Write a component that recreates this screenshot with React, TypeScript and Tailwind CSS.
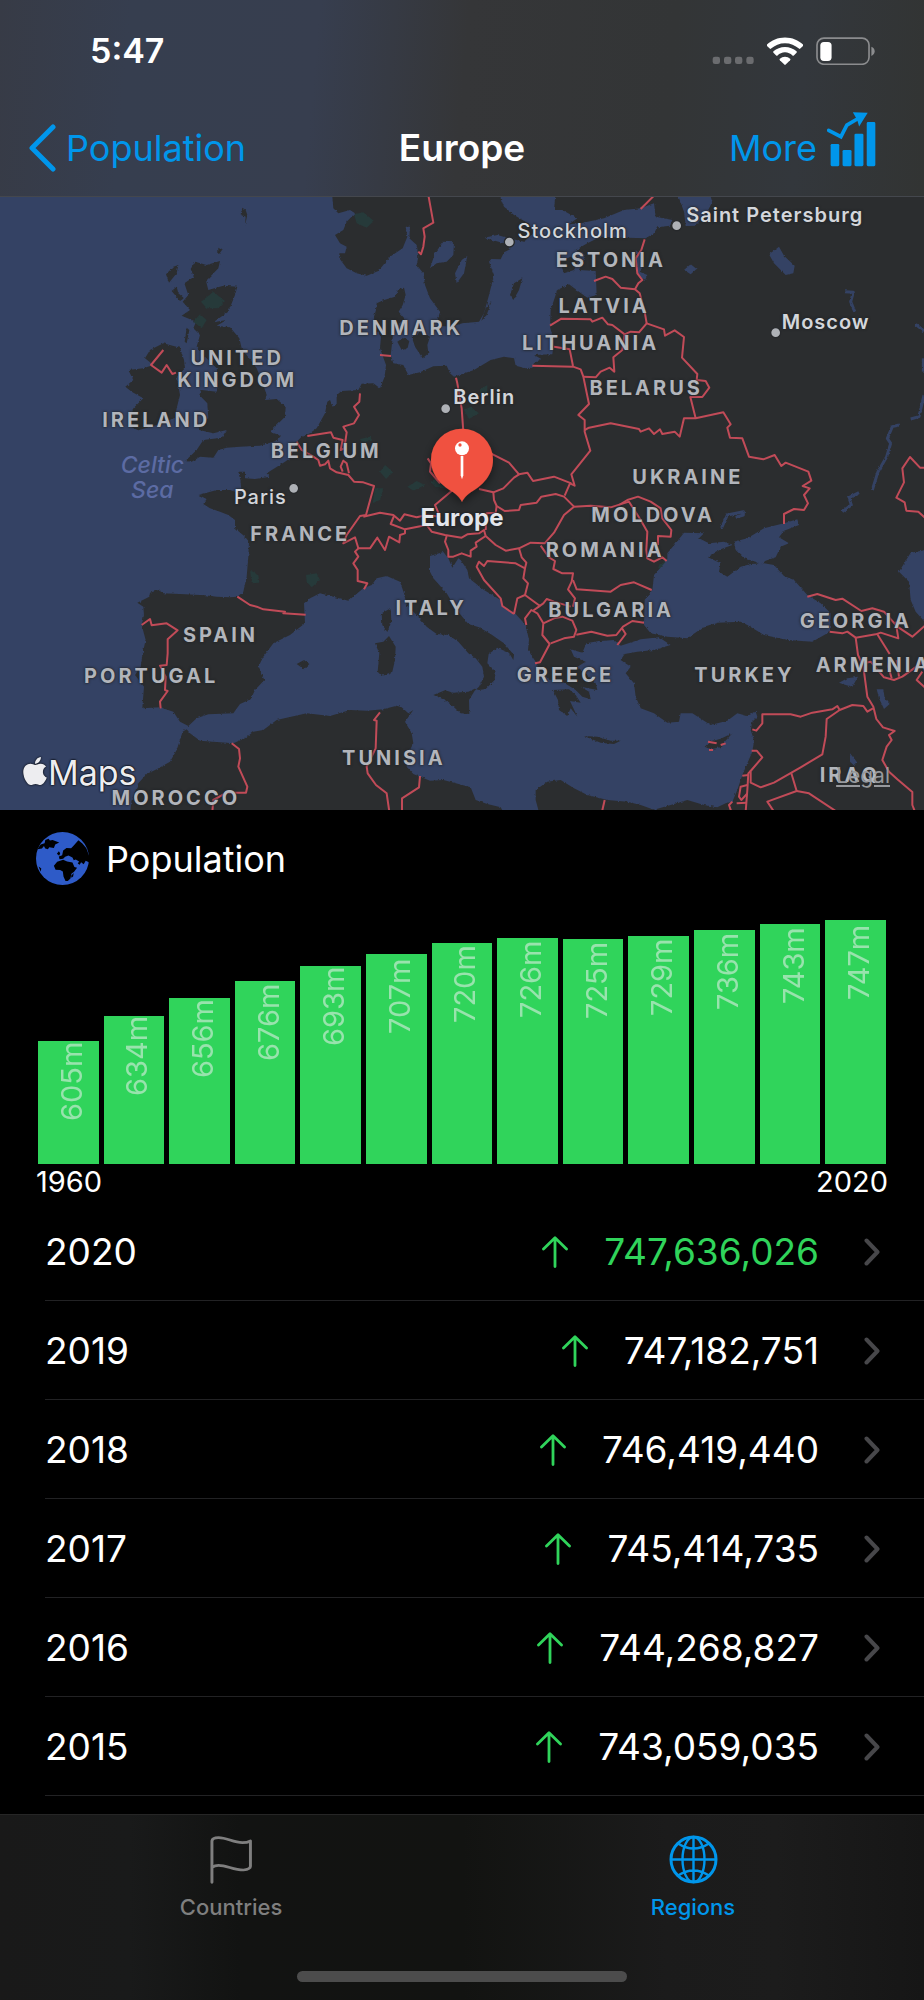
import React from "react";
import { FaApple } from "react-icons/fa";

type Tile = "nw" | "ne" | "sw" | "se";
type Part = [Tile, string];

/* The map is drafted in four sheets; each has its own origin on the full map. */
const origin: Record<Tile, [number, number]> = {
  nw: [0, 0],
  ne: [1362, 0],
  sw: [0, 915],
  se: [1362, 915],
};
const MAP_W = 2772;
const MAP_TOP = 6;
const MAP_H = 1839;

function pts(...parts: Part[]) {
  return parts
    .map(([tile, list]) => {
      const [ox, oy] = origin[tile];
      return list
        .trim()
        .split(/\s+/)
        .map((p) => {
          const [x, y] = p.split(",").map(Number);
          return `${x + ox},${y + oy}`;
        })
        .join(" ");
    })
    .join(" ");
}

const continent = pts(
  ["nw", "1212,278 1195,283 1185,305 1150,316 1130,325 1128,345 1122,365 1125,400 1143,425 1140,460 1158,510 1154,545 1140,580 1120,565 1085,566 1075,585 1025,588 1010,600 1010,628 998,635 990,615 982,620 975,655 950,700 930,715 905,725 890,740 870,790 855,800 800,835 810,845 765,852 735,850 735,830 715,830 722,860 725,897 690,885 650,885 596,900 620,912"],
  ["sw", "610,12 630,25 660,35 685,45 705,60 705,85 735,110 747,125 745,170 740,230 730,275 712,290 690,292 650,290 615,286 555,283 490,280 475,270 450,278 448,290 412,308 430,320 432,345 425,375 437,420 428,460 422,500 405,525 432,560 427,625 480,622 520,635 540,665 565,678 590,655 625,643 700,640 720,612 752,598 765,570 793,540 775,500 790,470 820,430 870,405 915,370 912,310 930,295 960,280 1000,290 1045,302 1090,265 1115,255 1130,235 1160,228 1200,245 1212,280 1220,315 1250,345 1280,380 1310,402 1345,405 1375,425 1405,460"],
  ["se", "65,475 85,500 90,530 75,560 62,572 45,600 46,642 20,640 0,622"],
  ["sw", "1335,600 1300,585 1335,571 1360,578 1405,575"],
  ["se", "62,566 75,570 95,567 122,540 125,515 100,490 104,462 130,443 165,458 178,480 180,465 150,430 110,402 75,382 43,372"],
  ["sw", "1370,330 1340,280 1300,235 1290,215 1290,168 1330,156 1345,175 1357,203 1375,175"],
  ["se", "20,180 40,210 45,235 90,270 140,300 150,325 185,342 215,375 225,420 222,450 245,485 262,520 290,540 330,548 365,570 385,590 410,598 405,575 380,560 430,570 425,550 405,530 370,500 395,485 360,470 350,448 385,458 397,430 430,424 480,420 500,437 560,418 615,412 650,435 600,450 550,455 512,462 500,480 530,500 515,520 540,550 545,590 560,625 600,640 640,668 675,665 680,640 715,640 770,675 820,662 850,640 880,648 905,635 910,650 895,665 890,690 900,720 895,755 880,790 865,825 850,870 835,905 815,910 790,922 750,915 700,900 650,915 600,929 560,915 520,905 460,900 400,885 360,865 320,840 280,845 245,870 245,900 253,929 240,940 150,940 140,922 100,912 65,900 50,862 0,848"],
  ["sw", "1330,840 1290,842 1240,822 1220,800 1225,760 1240,730 1235,700 1215,665 1240,630 1225,640 1205,622 1190,617 1150,628 1100,632 1050,630 990,648 920,640 830,660 790,690 760,695 735,715 700,730 640,725 600,722 570,700 560,688 548,695 530,750 510,785 470,808 440,822 415,850 395,900 390,940"],
  ["se", "1450,940"],
  ["ne", "1450,-20"],
  ["nw", "995,-20 1000,40 1015,55 1050,45 1065,55 1040,80 1030,105 1005,120 1020,145 1040,155 1035,175 1018,175 1018,190 1040,220 1070,235 1100,242 1135,228 1170,185 1208,160 1222,125 1217,95 1230,95 1228,130 1250,150 1255,185 1250,210 1270,235 1275,270 1290,310 1320,350 1312,378 1320,392"],
  ["ne", "-10,395 25,385 75,380 90,355 105,300 120,240 105,200 112,192 140,193 150,172 170,162 150,145 90,128 130,120 165,130 210,140 240,112 222,85 180,60 150,35 128,-20 306,-20 300,45 325,45 370,70 345,88 380,85 450,70 510,45 560,40 600,25 605,65 655,75 648,92 610,97 600,115 575,130 520,128 440,125 400,145 365,165 395,180 375,225 425,228 428,300 400,308 375,290 345,268 310,285 300,315 290,345 288,395 300,440 295,478 240,480 262,492 240,505 232,518 215,520 185,512 180,490 150,485 110,495 60,525 0,545"],
  ["nw", "1350,535 1340,512 1300,514 1260,532 1225,540 1210,510 1180,505 1172,480 1178,430 1178,400 1215,372 1196,350 1208,330 1217,300"],
);

const islands = [
  pts(["nw", "585,200 620,210 660,198 655,220 618,258 625,285 670,272 712,275 705,300 685,350 640,382 680,375 650,392 690,397 718,430 725,460 740,480 770,520 790,570 800,600 795,615 830,612 857,635 855,665 810,710 843,722 830,737 780,752 720,755 680,758 655,765 640,788 600,785 575,800 556,798 590,765 610,735 665,728 680,705 640,715 598,705 595,690 625,670 622,625 598,600 605,585 650,590 655,560 650,520 600,470 590,455 600,420 580,400 588,380 545,362 570,345 548,320 565,300 553,265 582,245 572,222"]),
  pts(["nw", "490,445 540,458 552,495 555,520 530,545 540,600 530,640 525,668 470,690 415,706 385,692 400,640 430,610 395,590 376,575 400,555 385,525 430,520 460,510 435,490 450,465"]),
  pts(["nw", "535,210 520,215 498,238 507,263 530,235"]),
  pts(["nw", "515,288 530,275 535,295 552,310 540,318"]),
  pts(["nw", "560,398 568,405 560,445 554,440"]),
  pts(["nw", "727,38 737,45 742,60 735,92 737,65 722,58"]),
  pts(["nw", "655,158 666,165 655,180"]),
  pts(["nw", "1192,440 1210,428 1228,438 1222,462 1205,465"]),
  pts(["nw", "1235,425 1262,412 1290,425 1282,450 1285,475 1268,490 1245,455"]),
  pts(["ne", "180,265 205,250 195,285 178,315 168,300"]),
  pts(["ne", "112,320 98,360 82,378 95,340"]),
  pts(["ne", "318,200 350,185 372,200 360,225 330,235"]),
  pts(["sw", "1145,340 1172,325 1174,365 1162,396 1147,375"]),
  pts(["sw", "1125,430 1150,425 1167,408 1187,440 1185,480 1177,515 1145,528 1133,515 1138,460"]),
  pts(["sw", "890,492 912,480 928,492 912,508"]),
  pts(["se", "297,570 345,568 365,585 380,608 348,603 370,650 350,625 340,648 315,630 312,600"]),
  pts(["se", "390,708 430,710 470,722 500,722 480,732 440,728"]),
  pts(["se", "752,740 768,725 800,716 835,700 812,725 800,742 770,748"]),
];

const waters = [
  pts(["se", "690,98 750,100 735,115 765,130 810,125 835,135 800,148 762,172 800,190 795,215 820,230 860,200 890,192 930,190 960,195 990,228 1020,240 1060,285 1100,310 1130,340 1128,395 1075,425 1000,420 930,405 880,375 860,365 790,368 750,380 700,415 640,410 590,400 570,375 572,300 595,270 600,225 640,180 640,160 665,130"]),
  pts(["se", "840,125 880,115 930,85 990,70 1030,58 1035,75 990,92 975,112 1005,130 980,140 965,172 935,182 918,195 905,185 870,175 845,150"]),
  pts(["se", "1430,148 1370,158 1335,215 1365,245 1370,300 1385,335 1430,385"]),
  pts(["nw", "1330,140 1362,142 1360,180 1340,200 1310,205 1290,220 1305,175"]),
  pts(["nw", "1402,183 1392,235 1370,265 1365,235 1385,195"]),
  pts(["ne", "668,-10 765,-10 775,20 760,50 725,92 695,93 690,50"]),
  pts(["ne", "545,165 562,180 560,232 580,240 572,258 550,235"]),
  pts(["ne", "690,225 710,208 728,222 710,238"]),
  pts(["ne", "945,178 975,155 990,182 1022,212 1018,235 995,240 960,205"]),
  pts(["se", "1155,548 1180,535 1212,530 1195,560 1175,555"]),
  pts(["se", "1268,568 1288,568 1292,595 1307,612 1290,627 1275,595"]),
  pts(["se", "1188,760 1208,785 1202,798 1188,785"]),
];

const rivers = [
  pts(["ne", "1335,690 1315,695 1300,730 1310,745 1298,785 1272,830 1255,885"]),
  pts(["ne", "1215,893 1185,908 1192,930 1165,950"]),
  pts(["ne", "1410,600 1395,665 1370,672"]),
  pts(["ne", "1173,290 1198,292 1190,320 1202,350"]),
  pts(["ne", "1385,388 1410,408"]),
  pts(["ne", "1408,490 1408,530"]),
  pts(["se", "802,85 820,45 868,35 868,45 845,52"]),
];

const borders = [
  pts(["nw", "1285,0 1300,83 1270,100 1274,125 1270,155 1263,178 1255,170"]),
  pts(["nw", "490,465 453,510 485,533 500,510 517,537 528,533"]),
  pts(["nw", "1140,480 1173,483"]),
  pts(["nw", "1080,595 1078,620 1062,635 1077,660 1062,685 1030,695 1040,712 1033,760 1022,765 1028,735 1000,728 993,712 922,723"]),
  pts(["nw", "890,740 905,765 940,785 955,795 960,812 975,808 985,797 990,820 1010,832 1045,840 1062,860 1090,862 1122,873 1098,960 1080,963"], ["sw", "1040,105 1030,130 1065,112 1075,145 1110,145 1132,113 1155,150 1167,110 1198,127 1200,105 1215,100 1215,88 1172,72 1182,48"]),
  pts(["nw", "1047,835 1040,805 1030,797 1022,815 1028,830"]),
  pts(["nw", "1368,548 1372,565 1385,640 1390,710"]),
  pts(["nw", "1283,790 1293,805 1290,830 1320,865"]),
  pts(["nw", "1370,875 1305,930"], ["sw", "1320,50 1280,45 1250,52 1213,43 1200,62 1180,45 1140,38 1090,50"]),
  pts(["sw", "1215,88 1280,75 1295,95 1335,105 1385,113 1402,103"], ["se", "75,100 90,90 95,108 125,135 155,152 195,145 230,128 272,130 300,98 330,45 360,20 410,17 470,22 525,5 560,60 580,95 577,150 580,175 600,185 625,172 638,183"]),
  pts(["sw", "1075,145 1065,155 1075,170 1060,190 1073,210 1073,243 1102,250 1092,268"]),
  pts(["sw", "1340,108 1335,125 1345,150 1345,170 1360,170 1385,160"], ["se", "50,170 50,152 68,140 65,128 95,108"]),
  pts(["sw", "712,290 750,315 770,320 790,328 855,335 850,340 917,344"]),
  pts(["sw", "425,375 450,357 455,376 500,370 533,391 503,418 503,460 500,495 480,497 497,530 495,570 503,573 480,605 482,625"]),
  pts(["sw", "695,730 717,747 720,775 715,800 742,860 738,878 680,878 640,900 637,935"]),
  pts(["sw", "1140,637 1122,660 1130,662 1127,745 1100,800 1103,820 1128,855 1160,880 1168,935"]),
  pts(["sw", "1260,828 1257,862 1206,895 1206,935"]),
  pts(["ne", "560,42 600,2"]),
  pts(["ne", "572,133 562,165 545,190 550,235 565,255 553,265 543,283 557,295 572,350 578,385"]),
  pts(["ne", "420,258 455,245 475,252 500,278 543,283"]),
  pts(["ne", "288,392 322,371 410,373 415,380 445,368 462,388 475,390 512,418 530,410 555,412 578,385 630,403 633,422 662,406 690,426 684,488 730,537 728,555 755,558 766,578 745,606 709,606 725,670"]),
  pts(["ne", "512,418 505,465 478,487 481,530 467,518 440,530 425,547 388,545"]),
  pts(["ne", "300,455 347,463 357,513"]),
  pts(["ne", "235,512 357,515 380,523 388,545 405,627 373,660 392,675 392,710 409,767 352,838 362,872 348,865 332,902"]),
  pts(["ne", "392,705 405,698 470,685 555,702 560,710 585,700 600,717 618,703 625,717 662,710 677,725 690,670 725,670 808,652 830,688 820,698 828,728 865,730 885,785 928,793 962,780 982,813 995,803 1063,830 1072,857 1046,873 1067,880 1050,900 1062,925"], ["se", "1050,30 1020,27 990,42 990,72"]),
  pts(["ne", "110,775 165,803 195,838 220,833 237,858 300,845 352,865"]),
  pts(["ne", "195,838 180,848 148,880 118,892 75,882"]),
  pts(["ne", "118,892 120,915"], ["se", "128,18 152,33 195,30 200,15 248,8 262,-10 305,-18 330,-10 360,20"]),
  pts(["se", "128,18 125,38 98,40 95,90"]),
  pts(["se", "180,342 145,318 140,295 90,240 68,200 75,185 90,198 100,183 185,190 213,205 208,235 222,250 213,285 190,295 180,342"]),
  pts(["se", "195,145 203,172 217,188 213,205"]),
  pts(["se", "260,137 285,172 303,183 298,207 325,220 357,220 353,245 342,268 363,295 357,320"]),
  pts(["se", "357,240 368,268 470,275 500,255 540,247 593,270"]),
  pts(["se", "213,285 258,318 240,330 268,310 278,297 300,305 350,320"]),
  pts(["se", "217,375 213,355 232,330 250,340 268,370 265,405 287,432 258,487 243,490"]),
  pts(["se", "268,370 300,355 325,350 355,362 367,390 360,410 330,415 290,430"]),
  pts(["se", "367,404 412,395 460,407 487,405 507,380 535,363 570,368"]),
  pts(["se", "503,383 515,402 490,435"]),
  pts(["ne", "495,930 520,915 552,905 590,920"], ["se", "620,25 625,55 652,90 650,110 612,108 612,135"]),
  pts(["se", "1060,290 1090,282 1145,300 1165,296 1222,333 1255,325 1290,335 1330,380 1375,410 1415,375"]),
  pts(["se", "1127,395 1165,400 1180,395 1205,413 1265,403 1280,398 1333,415 1325,365"]),
  pts(["se", "1205,413 1212,465 1228,500 1240,590 1258,620 1267,657 1287,682 1322,693 1305,705 1313,720 1298,740 1285,780 1305,815 1330,838 1375,876 1375,915 1383,935"]),
  pts(["se", "1270,403 1307,462"]),
  pts(["se", "1228,490 1250,485 1290,532 1320,540 1345,530 1380,505 1415,480"]),
  pts(["se", "1405,515 1388,540 1412,562"]),
  pts(["se", "1307,470 1303,500 1313,535"]),
  pts(["se", "1328,480 1335,530"]),
  pts(["se", "895,688 907,692 925,670 925,643 1010,643 1040,650 1075,638 1135,628 1150,618 1157,630 1195,615 1228,618 1240,635 1257,625"]),
  pts(["se", "1157,630 1118,657 1115,710 1105,763 1040,802 960,848 920,862 890,848 890,813 925,772 908,752 893,752"]),
  pts(["se", "890,813 883,820 880,870 875,935"]),
  pts(["se", "865,827 883,825"]),
  pts(["se", "880,855 860,860 855,890 862,900 880,880"]),
  pts(["se", "848,910 878,908"]),
  pts(["se", "835,905 825,915 832,935"]),
  pts(["se", "1012,820 1028,873 940,905 960,935"]),
  pts(["se", "1028,873 1065,880 1148,935"]),
  pts(["se", "452,900 444,935"]),
  pts(["se", "762,725 788,730"]),
  pts(["se", "800,735 815,730"]),
  pts(["se", "765,750 777,750"]),
  pts(["ne", "1412,818 1398,818 1368,786 1345,820 1350,862 1327,908 1352,922"], ["se", "1357,32 1393,35 1415,55"]),
];

const parks = [
  pts(["nw", "1062,58 1090,52 1122,78 1100,98 1070,85"]),
  pts(["nw", "603,320 640,290 675,318 655,340 620,340"]),
  pts(["nw", "580,380 600,358 620,375 605,400"]),
  pts(["nw", "1140,830 1155,810 1180,830 1158,852"]),
  pts(["nw", "1222,875 1250,858 1275,870 1240,887"]),
  pts(["nw", "1125,880 1150,880 1140,915 1118,925"]),
  pts(["nw", "1080,732 1110,725 1118,738 1085,740"]),
  pts(["nw", "1292,860 1315,845 1345,880 1310,880"]),
  pts(["ne", "30,645 50,635 75,655 45,672"]),
  pts(["ne", "75,585 100,570 100,600 85,605"]),
  pts(["sw", "750,210 775,225 778,248 755,250"]),
  pts(["sw", "918,225 950,220 960,240 935,262 920,245"]),
  pts(["se", "618,190 638,180 632,205 612,205"]),
];

type Label = { text: string; x: number; y: number };

const countries: Label[] = [
  { text: "ESTONIA", x: 1828, y: 194 },
  { text: "LATVIA", x: 1808, y: 333 },
  { text: "LITHUANIA", x: 1767, y: 445 },
  { text: "BELARUS", x: 1934, y: 579 },
  { text: "UKRAINE", x: 2059, y: 846 },
  { text: "DENMARK", x: 1199, y: 400 },
  { text: "UNITED\nKINGDOM", x: 707, y: 523 },
  { text: "IRELAND", x: 464, y: 676 },
  { text: "BELGIUM", x: 974, y: 769 },
  { text: "FRANCE", x: 896, y: 1016 },
  { text: "SPAIN", x: 657, y: 1321 },
  { text: "PORTUGAL", x: 449, y: 1443 },
  { text: "ITALY", x: 1289, y: 1239 },
  { text: "TUNISIA", x: 1177, y: 1688 },
  { text: "MOROCCO", x: 523, y: 1810 },
  { text: "MOLDOVA", x: 1955, y: 960 },
  { text: "ROMANIA", x: 1811, y: 1066 },
  { text: "BULGARIA", x: 1829, y: 1245 },
  { text: "GREECE", x: 1692, y: 1440 },
  { text: "TURKEY", x: 2229, y: 1439 },
  { text: "GEORGIA", x: 2563, y: 1279 },
  { text: "ARMENIA", x: 2616, y: 1409 },
  { text: "IRAQ", x: 2545, y: 1741 },
];

const cities: (Label & { dot: [number, number]; major: boolean })[] = [
  { text: "Stockholm", x: 1718, y: 108, dot: [1528, 141], major: false },
  { text: "Saint Petersburg", x: 2324, y: 60, dot: [2030, 92], major: true },
  { text: "Moscow", x: 2477, y: 382, dot: [2327, 413], major: true },
  { text: "Berlin", x: 1453, y: 607, dot: [1337, 641], major: true },
  { text: "Paris", x: 781, y: 905, dot: [881, 880], major: false },
];

const at = (x: number, y: number) => ({
  left: `${(x / MAP_W) * 100}%`,
  top: `${((y - MAP_TOP) / MAP_H) * 100}%`,
});

function EuropeMap() {
  return (
    <section aria-label="Map of Europe" className="relative w-full overflow-hidden bg-[#344264]">
      <svg viewBox={`0 ${MAP_TOP} ${MAP_W} ${MAP_H}`} className="block h-auto w-full" aria-hidden="true">
        <defs>
          <filter id="coast" x="0" y="0" width="100%" height="100%" colorInterpolationFilters="sRGB">
            <feTurbulence type="fractalNoise" baseFrequency="0.12" numOctaves="2" seed="4" result="n" />
            <feDisplacementMap in="SourceGraphic" in2="n" scale="8" xChannelSelector="R" yChannelSelector="G" />
          </filter>
          <filter id="pinShadow" x="-30%" y="-30%" width="160%" height="170%">
            <feDropShadow dx="0" dy="10" stdDeviation="14" floodColor="#000" floodOpacity="0.45" />
          </filter>
        </defs>
        <g filter="url(#coast)">
          <g fill="#2b2d2f">
            <polygon points={continent} />
            {islands.map((p) => (
              <polygon key={p} points={p} />
            ))}
          </g>
          <g fill="#263a3a">
            {parks.map((p) => (
              <polygon key={p} points={p} />
            ))}
          </g>
          <g fill="#344264">
            {waters.map((p) => (
              <polygon key={p} points={p} />
            ))}
          </g>
          <g fill="none" stroke="#344264" strokeWidth="9" strokeLinejoin="round">
            {rivers.map((p) => (
              <polyline key={p} points={p} />
            ))}
          </g>
        </g>
        <g fill="none" stroke="#c14b58" strokeWidth="6" strokeLinejoin="round">
          {borders.map((p) => (
            <polyline key={p} points={p} />
          ))}
        </g>
        <g fill="#aeb1b6" stroke="#26282b" strokeWidth="4">
          {cities.map((c) => (
            <circle key={c.text} cx={c.dot[0]} cy={c.dot[1]} r="15" />
          ))}
        </g>
        <g>
          <path
            filter="url(#pinShadow)"
            fill="#f0513f"
            d="M1386 701a93 93 0 0 1 93 93c0 48-34 78-62 95-16 10-24 19-31 32-7-13-15-22-31-32-28-17-62-47-62-95a93 93 0 0 1 93-93z"
          />
          <circle cx="1386" cy="760" r="21" fill="#fff" />
          <circle cx="1380" cy="750" r="5" fill="#f0513f" />
          <path d="M1382 783h8v58l-4 12-4-12z" fill="#fff" />
        </g>
      </svg>

      {countries.map((c) => (
        <span
          key={c.text}
          style={at(c.x, c.y)}
          className="absolute -translate-x-1/2 -translate-y-1/2 pl-[3px] text-center text-[20px] leading-[22px] font-bold tracking-[3px] whitespace-pre text-[#b2b5bb] [text-shadow:0_0_3px_#232629,0_0_2px_#232629]"
        >
          {c.text}
        </span>
      ))}
      {cities.map((c) => (
        <span
          key={c.text}
          style={at(c.x, c.y)}
          className={`absolute -translate-x-1/2 -translate-y-1/2 text-[20px] leading-6 tracking-[1px] whitespace-nowrap text-[#d3d6db] [text-shadow:0_0_3px_#232629,0_0_2px_#232629] ${c.major ? "font-semibold" : "font-medium"}`}
        >
          {c.text}
        </span>
      ))}
      <span
        style={at(457, 848)}
        className="absolute -translate-x-1/2 -translate-y-1/2 text-center text-[23px] leading-[25px] font-medium whitespace-pre text-[#5c6ba3] italic"
      >
        {"Celtic\nSea"}
      </span>
      <span
        style={at(1386, 968)}
        className="absolute -translate-x-1/2 -translate-y-1/2 text-[24px] leading-7 font-bold text-[#e3e6ec] [text-shadow:0_0_3px_#1c1f22,0_0_2px_#1c1f22]"
      >
        Europe
      </span>

      <div className="absolute bottom-[14px] left-[23px] flex items-center gap-px text-[#ededf0] [text-shadow:0_0_2px_#000,0_0_2px_#000]">
        <FaApple className="mb-1 h-8 w-6 drop-shadow-[0_0_1px_#000]" aria-hidden="true" />
        <span className="text-[34px] leading-[46px]">Maps</span>
      </div>
      <a href="#legal" className="absolute right-[34px] bottom-5 text-[21px] leading-7 text-[#97999d] underline">
        Legal
      </a>
    </section>
  );
}

const bars = [605, 634, 656, 676, 693, 707, 720, 726, 725, 729, 736, 743, 747];
const barHeight = (v: number) => Math.round(123 + (v - 605) * 0.85);

function PopulationChart() {
  return (
    <section className="px-9 pt-[22px]">
      <div className="flex items-center gap-[17px]">
        <svg viewBox="108 94 160 160" className="size-[53px]" aria-hidden="true">
          <circle cx="188" cy="174" r="80" fill="#2e5bc8" />
          <g fill="#000">
            <path d="M162 196l10-12 18-6 12 5 16 3 6 14 8 2-9 12-8 6-3 14-8 8h-7l-6-14-2-15-8-4-14-1z" />
            <path d="M171 160l6-8 4 6-3 8zM179 176l-2-8 10-4 3-14 10-8 14 1 8-8 14-16 12 10 12 14 8 22v20l-10-4-6 10-8-6-4 8-6-4 4-6-10-6-6 2-4-8-12-6-10 4-6 6z" />
            <path d="M112 146l10-14 12-4 2-10 10-4 4 6 8-2 20 8-12 6-4 10-14-2-4 6-8-2-4-8-6 8zM116 198l8 6-2 10z" />
            <path d="M214 226l8-8-2 10-5 4z" />
          </g>
        </svg>
        <h2 className="text-[36px] leading-[44px]">Population</h2>
      </div>
      <div className="mt-[35px] flex h-[244px] items-end gap-[5px] px-[2px]">
        {bars.map((v) => (
          <div key={v} style={{ height: barHeight(v) }} className="flex flex-1 justify-center bg-[#30d45b] pl-[7px]">
            <span className="h-20 rotate-180 text-[29px] leading-8 text-[#98e3ad] [writing-mode:vertical-rl]">
              {v}m
            </span>
          </div>
        ))}
      </div>
      <div className="flex justify-between pb-[2px] text-[29px] leading-9">
        <span>1960</span>
        <span>2020</span>
      </div>
    </section>
  );
}

const years = [
  { year: "2020", value: "747,636,026" },
  { year: "2019", value: "747,182,751" },
  { year: "2018", value: "746,419,440" },
  { year: "2017", value: "745,414,735" },
  { year: "2016", value: "744,268,827" },
  { year: "2015", value: "743,059,035" },
];

function YearList() {
  return (
    <ul className="pb-[18px] pl-[45px]">
      {years.map((r, i) => (
        <li key={r.year} className="border-b border-[#222224]">
          <a href={`#${r.year}`} className="flex h-[98px] items-center pt-[2px] pr-[44px] text-[37px] leading-[44px]">
            <span className="flex-1">{r.year}</span>
            <svg viewBox="0 0 26 32" className="mr-9 h-8 w-[26px]" aria-label="Up">
              <path d="M13 30.5V2M1.5 13L13 1.800L24.500 13" fill="none" stroke="#30d45b" strokeWidth="2.800" strokeLinecap="round" strokeLinejoin="round" />
            </svg>
            <span className={i === 0 ? "text-[#30d45b]" : ""}>{r.value}</span>
            <svg viewBox="0 0 16 28" className="ml-[45px] h-7 w-4" aria-hidden="true">
              <path d="M2.500 2.500L13.500 14L2.500 25.500" fill="none" stroke="#47474a" strokeWidth="4" strokeLinecap="round" strokeLinejoin="round" />
            </svg>
          </a>
        </li>
      ))}
    </ul>
  );
}

function Header() {
  return (
    <header className="border-b border-[#44474d] bg-[linear-gradient(95deg,#373b46_0%,#363e4f_14%,#373e4f_34%,#353638_50%,#333536_72%,#33373c_86%,#323433_100%)] pb-[2px]">
      <div className="flex h-[102px] items-center justify-between pr-[49px] pl-[90px]">
        <span className="text-[34px] leading-10 font-semibold">5:47</span>
        <div className="flex items-center gap-[13px]">
          <svg viewBox="0 0 126 82" className="h-7 w-[42px]" aria-hidden="true">
            {[2, 36, 69, 103].map((x) => (
              <rect key={x} x={x} y="58" width="22" height="22" rx="7" fill="#6b6c6f" />
            ))}
          </svg>
          <svg viewBox="202 49 106 82" className="h-7 w-9" fill="#fff" aria-label="Wi-Fi">
            <path d="M255 50c21 0 40 8 53 21q2 2 0 4l-8 8q-2 2-4 0c-11-10-25-16-41-16s-30 6-41 16q-2 2-4 0l-8-8q-2-2 0-4c13-13 32-21 53-21z" />
            <path d="M255 78c13 0 25 5 34 13q2 2 0 4l-8 8q-2 2-4 0c-6-5-13-9-22-9s-16 4-22 9q-2 2-4 0l-8-8q-2-2 0-4c9-8 21-13 34-13z" />
            <path d="M255 107c6 0 11 2 15 6q2 2 0 4l-13 13q-2 2-4 0l-13-13q-2-2 0-4c4-4 9-6 15-6z" />
          </svg>
          <svg viewBox="350 48 178 84" className="h-7 w-[59px]" aria-label="Battery low">
            <rect x="353" y="51" width="157" height="79" rx="21" fill="none" stroke="#8b8c8e" strokeWidth="5" />
            <path d="M517 77q10 4 10 14t-10 14z" fill="#8b8c8e" />
            <rect x="363" y="63" width="34" height="57" rx="11" fill="#fff" />
          </svg>
        </div>
      </div>
      <nav className="grid h-[92px] grid-cols-[1fr_auto_1fr] items-center px-7 text-[36px] leading-[44px]">
        <a href="#population" className="flex items-center gap-[10px] text-[#0096eb]">
          <svg viewBox="0 0 28 48" className="h-12 w-7" aria-hidden="true">
            <path d="M25 3L4 24L25 45" fill="none" stroke="currentColor" strokeWidth="5" strokeLinecap="round" strokeLinejoin="round" />
          </svg>
          Population
        </a>
        <h1 className="text-[37px] font-semibold">Europe</h1>
        <button type="button" className="flex items-center justify-end gap-[10px] pr-5 text-[#0096eb]">
          More
          <svg viewBox="379 270 148 168" className="mb-[18px] h-14 w-[49px]" fill="currentColor" aria-hidden="true">
            <rect x="390" y="369" width="26" height="67" rx="4" />
            <rect x="426" y="387" width="27" height="49" rx="4" />
            <rect x="462" y="338" width="27" height="98" rx="4" />
            <rect x="499" y="303" width="26" height="133" rx="4" />
            <path d="M384 328L421 347L439 312L478 289" fill="none" stroke="currentColor" strokeWidth="11" strokeLinecap="round" />
            <path d="M457 273L502 275L476 316L470 296z" />
          </svg>
        </button>
      </nav>
    </header>
  );
}

function TabBar() {
  return (
    <footer className="border-t border-[#262626] bg-[linear-gradient(90deg,#191919_0%,#191a1a_14%,#121312_26%,#121311_50%,#1b1b1b_72%,#1c1c1c_84%,#161616_100%)]">
      <nav className="grid grid-cols-2 pt-5 text-[22px] leading-7 font-medium">
        <button type="button" className="flex flex-col items-center gap-[9px] text-[#7f7f7f]">
          <svg viewBox="79 74 120 147" className="h-[49px] w-[44px]" preserveAspectRatio="none" aria-hidden="true">
            <path
              d="M87 216V92Q88 82 105 82C128 82 145 97 170 97Q183 97 192 92V168Q192 177 173 179C145 179 128 165 105 165Q95 165 87 171"
              fill="none"
              stroke="currentColor"
              strokeWidth="8"
              strokeLinecap="round"
              strokeLinejoin="round"
            />
          </svg>
          Countries
        </button>
        <button type="button" className="flex flex-col items-center gap-[9px] text-[#0096eb]">
          <svg viewBox="0 0 49 49" className="size-[49px]" fill="none" stroke="currentColor" strokeWidth="2.400" aria-hidden="true">
            <circle cx="24.500" cy="24.500" r="22.500" strokeWidth="3" />
            <ellipse cx="24.500" cy="24.500" rx="11" ry="22.500" />
            <path d="M24.500 2v45M2 24.500h45M9 8.500q15.500 10 31 0M9 40.500q15.500-10 31 0" />
          </svg>
          Regions
        </button>
      </nav>
      <div className="flex justify-center pt-[50px] pb-[18px]">
        <div className="h-[11px] w-[330px] rounded-full bg-[#4c4c4c]" />
      </div>
    </footer>
  );
}

export default function App() {
  return (
    <div className="min-h-screen bg-black font-['Inter','Liberation_Sans',sans-serif] text-white">
      <Header />
      <main>
        <EuropeMap />
        <PopulationChart />
        <YearList />
      </main>
      <TabBar />
    </div>
  );
}
